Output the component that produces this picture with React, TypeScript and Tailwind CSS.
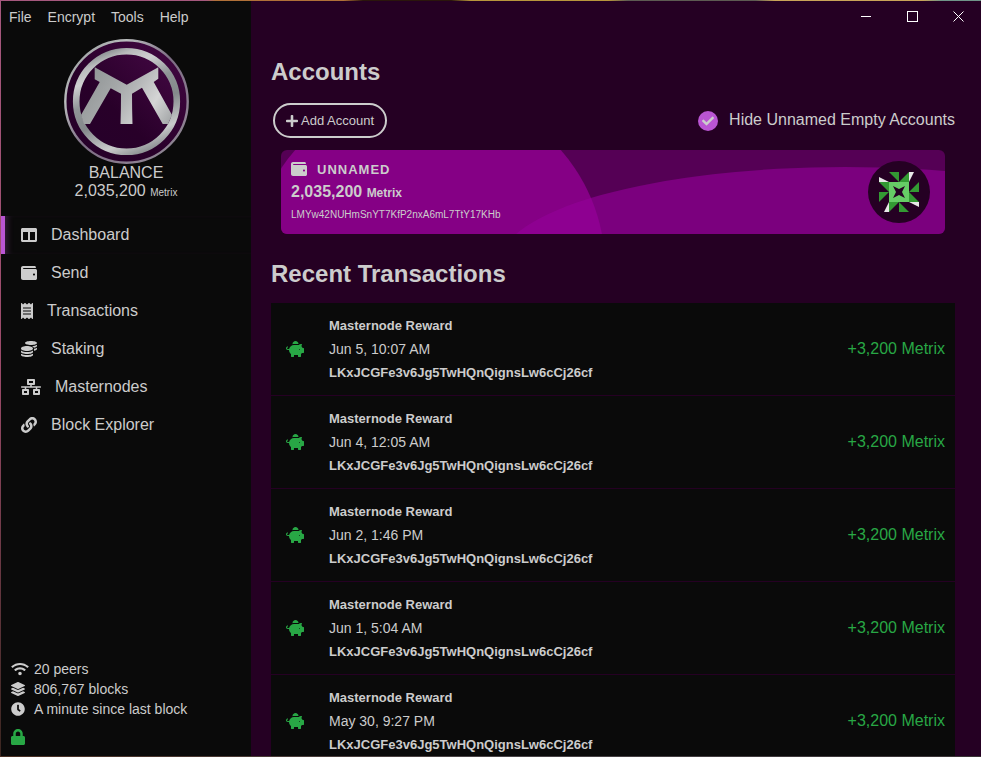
import {
  FaColumns, FaWallet, FaReceipt, FaCoins, FaNetworkWired, FaLink, FaWifi,
  FaLayerGroup, FaClock, FaLock, FaPlus, FaCheck, FaPiggyBank,
} from "react-icons/fa";

const menu = ["File", "Encrypt", "Tools", "Help"];

const nav = [
  { label: "Dashboard", icon: <FaColumns className="h-4 w-4" />, active: true },
  { label: "Send", icon: <FaWallet className="h-4 w-4" />, active: false },
  { label: "Transactions", icon: <FaReceipt className="h-4 w-3" />, active: false },
  { label: "Staking", icon: <FaCoins className="h-4 w-4" />, active: false },
  { label: "Masternodes", icon: <FaNetworkWired className="h-4 w-5" />, active: false },
  { label: "Block Explorer", icon: <FaLink className="h-4 w-4" />, active: false },
];

const transactions = [
  "Jun 5, 10:07 AM",
  "Jun 4, 12:05 AM",
  "Jun 2, 1:46 PM",
  "Jun 1, 5:04 AM",
  "May 30, 9:27 PM",
];

function Logo() {
  return (
    <svg viewBox="0 0 125 125" className="h-[125px] w-[125px]" role="img" aria-label="Metrix">
      <defs>
        <linearGradient id="rim" x1="0" y1="0" x2="1" y2="1">
          <stop offset="0" stopColor="#8f9395" />
          <stop offset="0.25" stopColor="#b9bcbd" />
          <stop offset="0.5" stopColor="#7d6d84" />
          <stop offset="0.8" stopColor="#8d8092" />
          <stop offset="1" stopColor="#8a8c8e" />
        </linearGradient>
        <linearGradient id="ring" x1="0.3" y1="0" x2="0.7" y2="1">
          <stop offset="0" stopColor="#8d9294" />
          <stop offset="0.08" stopColor="#b9bbbc" />
          <stop offset="0.2" stopColor="#cfd0d1" />
          <stop offset="0.4" stopColor="#8f9496" />
          <stop offset="0.6" stopColor="#84898b" />
          <stop offset="0.85" stopColor="#c9cacb" />
          <stop offset="1" stopColor="#8b8f91" />
        </linearGradient>
        <linearGradient id="plate" x1="0" y1="1" x2="1" y2="0">
          <stop offset="0" stopColor="#26002a" />
          <stop offset="0.4" stopColor="#280029" />
          <stop offset="1" stopColor="#450845" />
        </linearGradient>
        <linearGradient id="mark" gradientUnits="userSpaceOnUse" x1="17" y1="30" x2="110" y2="90">
          <stop offset="0" stopColor="#8b8f90" />
          <stop offset="0.35" stopColor="#a4a7a8" />
          <stop offset="0.5" stopColor="#b4b6b7" />
          <stop offset="0.72" stopColor="#d4d5d5" />
          <stop offset="1" stopColor="#96999b" />
        </linearGradient>
      </defs>
      <circle cx="62.5" cy="62.5" r="61.2" fill="url(#plate)" stroke="url(#rim)" strokeWidth="2.4" />
      <circle cx="62.5" cy="62.5" r="50.3" fill="url(#plate)" stroke="url(#ring)" strokeWidth="6.6" />
      <path
        d="M30.700 28.300L62.700 45.700L94.300 28.300V39.700L89.700 43L108 76L104 85H98.700L78 48.700L68 54.700Q68 70 68.500 85H56.500Q57 70 57 54.700L46.700 49.300L26 85H20L17 76L35.700 43L30.700 40.300Z"
        fill="url(#mark)"
      />
    </svg>
  );
}

function Identicon() {
  return (
    <svg viewBox="0 0 62 62" className="h-[62px] w-[62px]" role="img" aria-label="Account icon">
      <circle cx="31" cy="31" r="31" fill="#250023" />
      {[0, 90, 180, 270].map((angle) => (
        <g key={angle} transform={`rotate(${angle} 31 31)`}>
          <path d="M21 11H31V21Z" fill="#339933" />
          <path d="M31 21L41 11V21Z" fill="#339933" />
          <path d="M41 11H46L41 21Z" fill="#e8e8e8" />
        </g>
      ))}
      <rect x="21" y="21" width="20" height="20" fill="#66cc66" />
      <path d="M25 25L31 28L37 25L34 31L37 37L31 34L25 37L28 31Z" fill="#250023" />
    </svg>
  );
}

function Transaction({ date }: { date: string }) {
  return (
    <li className="flex items-center border-b border-[#250023] bg-[#0a0a0a] py-2.5 pr-2.5 pl-[15px]">
      <FaPiggyBank className="mr-[25px] h-4 w-[18px] shrink-0 text-[#28a745]" />
      <div className="min-w-0 flex-1">
        <p className="text-[13px] leading-[25px] font-bold">Masternode Reward</p>
        <p className="text-sm leading-[22px]">{date}</p>
        <p className="text-[13px] leading-[25px] font-bold">LKxJCGFe3v6Jg5TwHQnQignsLw6cCj26cf</p>
      </div>
      <span className="text-base text-[#28a745]">+3,200 Metrix</span>
    </li>
  );
}

export default function App() {
  return (
    <div className="flex h-screen flex-col overflow-hidden bg-[#0a0a0a] font-['Liberation_Sans',Arial,sans-serif] text-[#cccccc]">
      <div className="h-px shrink-0 bg-[linear-gradient(90deg,#a5587e_0%,#a5587e_21%,#b07038_22%,#b07038_35%,#2b160c_37%,#2b160c_46%,#b8963c_48%,#b8963c_62%,#5d5a52_64%,#5d5a52_77%,#c9a458_79%,#c9a458_94%,#6f9488_96%)]" />
      <div className="flex min-h-0 flex-1">
        <div className="w-px shrink-0 bg-linear-to-b from-[#a5587e] via-[#9a4a68] to-[#3b2620]" />
        <aside className="flex w-[250px] shrink-0 flex-col bg-[#0a0a0a]">
          <div className="flex gap-4 px-2 pt-1.5 text-sm">
            {menu.map((item) => (
              <button key={item} type="button">{item}</button>
            ))}
          </div>
          <div className="flex flex-col items-center pt-3">
            <Logo />
            <p className="text-base leading-[18px]">BALANCE</p>
            <p className="text-base leading-[18px]">
              2,035,200 <span className="text-[10px]">Metrix</span>
            </p>
          </div>
          <nav className="mt-3.5 flex flex-col">
            {nav.map((item) => (
              <a
                key={item.label}
                href="#"
                className={
                  item.active
                    ? "flex h-[38px] items-center gap-3.5 border-l-4 border-[#ba55d3] pl-4 shadow-[inset_6px_0_6px_-4px_#ba55d344]"
                    : "flex h-[38px] items-center gap-3.5 border-l-4 border-transparent pl-4"
                }
              >
                {item.icon}
                {item.label}
              </a>
            ))}
          </nav>
          <div className="mt-auto px-2.5 pb-[11px] text-sm leading-5">
            <p className="flex items-center gap-[5px]">
              <FaWifi className="h-3.5 w-[18px]" />20 peers
            </p>
            <p className="flex items-center gap-[9px]">
              <FaLayerGroup className="h-3.5 w-3.5" />806,767 blocks
            </p>
            <p className="flex items-center gap-[9px]">
              <FaClock className="h-3.5 w-3.5" />A minute since last block
            </p>
            <FaLock className="mt-2.5 h-4 w-3.5 text-[#28a745]" />
          </div>
        </aside>

        <main className="flex min-w-0 flex-1 flex-col overflow-hidden bg-[#250023]">
          <div className="flex h-[30px] shrink-0 justify-end text-white">
            <button type="button" aria-label="Minimize" className="grid w-[46px] place-items-center">
              <svg viewBox="0 0 11 11" className="h-[11px] w-[11px]"><path d="M0 5.500H10" stroke="currentColor" /></svg>
            </button>
            <button type="button" aria-label="Maximize" className="grid w-[46px] place-items-center">
              <svg viewBox="0 0 11 11" className="h-[11px] w-[11px]"><rect x="0.5" y="0.5" width="10" height="10" fill="none" stroke="currentColor" /></svg>
            </button>
            <button type="button" aria-label="Close" className="grid w-[46px] place-items-center">
              <svg viewBox="0 0 11 11" className="h-[11px] w-[11px]"><path d="M0.500 0.500L10.500 10.500M10.500 0.500L0.500 10.500" stroke="currentColor" /></svg>
            </button>
          </div>

          <div className="pr-[26px] pl-5">
            <h1 className="mt-[25px] text-2xl font-bold">Accounts</h1>
            <div className="mt-[15px] flex items-center justify-between pl-0.5">
              <button
                type="button"
                className="flex h-[35px] items-center gap-[3px] rounded-full border-2 border-[#cccccc] px-[11px] text-[13px]"
              >
                <FaPlus className="h-3.5 w-3" />
                Add Account
              </button>
              <label className="flex items-center gap-[11px]">
                <span className="relative grid h-5 w-5 place-items-center">
                  <input type="checkbox" defaultChecked className="h-5 w-5 appearance-none rounded-full bg-[#ba55d3]" />
                  <FaCheck className="pointer-events-none absolute h-3 w-3" />
                </span>
                <span className="pb-0.5">Hide Unnamed Empty Accounts</span>
              </label>
            </div>

            <section className="relative mx-2.5 mt-3 flex h-[84px] items-center justify-between overflow-hidden rounded-md bg-[#550055] pr-[15px] pl-2.5">
              <svg viewBox="0 0 664 84" preserveAspectRatio="none" className="absolute inset-0 h-full w-full" aria-hidden="true">
                <circle cx="147" cy="117" r="177" fill="#850085" />
                <ellipse cx="564" cy="113" rx="345" ry="96" fill="#94009a" fillOpacity="0.6" />
              </svg>
              <div className="relative">
                <p className="flex items-center gap-2.5 text-[13px] leading-5 font-bold tracking-[1px]">
                  <FaWallet className="mb-0.5 h-4 w-4" />
                  UNNAMED
                </p>
                <p className="text-base leading-6 font-bold">
                  2,035,200 <span className="text-[12px]">Metrix</span>
                </p>
                <p className="text-[10px] leading-5">LMYw42NUHmSnYT7KfP2nxA6mL7TtY17KHb</p>
              </div>
              <div className="relative"><Identicon /></div>
            </section>

            <h2 className="mt-6 text-2xl font-bold">Recent Transactions</h2>
            <ul className="mt-[13px]">
              {transactions.map((date) => (
                <Transaction key={date} date={date} />
              ))}
            </ul>
          </div>
        </main>
      </div>
      <div className="h-px shrink-0 bg-linear-to-r from-[#4a2f22] via-[#4a4548] to-[#3a3336]" />
    </div>
  );
}
